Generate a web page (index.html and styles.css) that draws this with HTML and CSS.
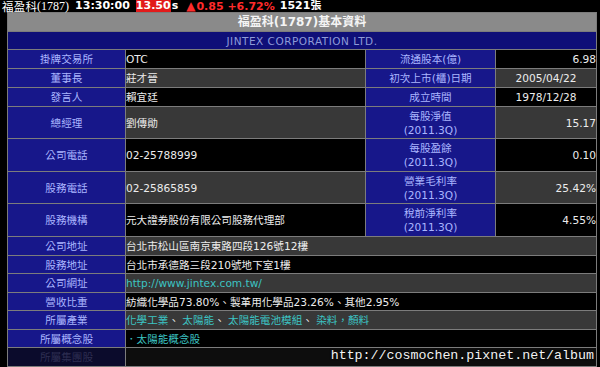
FILE: index.html
```
<!DOCTYPE html>
<html lang="zh-Hant">
<head>
<meta charset="utf-8">
<title>福盈科(1787)基本資料</title>
<link rel="stylesheet" href="styles.css">
</head>
<body>
<div class="quote">
  <span class="name">福盈科</span><span class="code">(1787)</span>
  <span class="time">13:30:00</span>
  <span class="price">13.50</span>
  <span class="unit">s</span>
  <span class="chg"><span class="tri">▲</span>0.85 +6.72%</span>
  <span class="vol">1521張</span>
</div>
<table class="info">
  <colgroup>
    <col class="c1"><col class="c2"><col class="c3"><col class="c4">
  </colgroup>
  <tr class="h-title"><th colspan="4" class="title">福盈科(1787)基本資料</th></tr>
  <tr class="h-en"><th colspan="4" class="en">JINTEX CORPORATION LTD.</th></tr>
  <tr class="s odd"><td class="lab">掛牌交易所</td><td class="val">OTC</td><td class="lab">流通股本(億)</td><td class="num">6.98</td></tr>
  <tr class="s even"><td class="lab">董事長</td><td class="val">莊才晉</td><td class="lab">初次上市(櫃)日期</td><td class="date">2005/04/22</td></tr>
  <tr class="s odd"><td class="lab">發言人</td><td class="val">賴宜廷</td><td class="lab">成立時間</td><td class="date">1978/12/28</td></tr>
  <tr class="t1 even"><td class="lab">總經理</td><td class="val">劉傳勛</td><td class="lab">每股淨值<br>(2011.3Q)</td><td class="num">15.17</td></tr>
  <tr class="t2 odd"><td class="lab">公司電話</td><td class="val">02-25788999</td><td class="lab">每股盈餘<br>(2011.3Q)</td><td class="num">0.10</td></tr>
  <tr class="t1 even"><td class="lab">股務電話</td><td class="val">02-25865859</td><td class="lab">營業毛利率<br>(2011.3Q)</td><td class="num">25.42%</td></tr>
  <tr class="t2 odd"><td class="lab">股務機構</td><td class="val">元大證券股份有限公司股務代理部</td><td class="lab">稅前淨利率<br>(2011.3Q)</td><td class="num">4.55%</td></tr>
  <tr class="s even"><td class="lab">公司地址</td><td class="val" colspan="3">台北市松山區南京東路四段126號12樓</td></tr>
  <tr class="s2 odd"><td class="lab">股務地址</td><td class="val" colspan="3">台北市承德路三段210號地下室1樓</td></tr>
  <tr class="s even"><td class="lab">公司網址</td><td class="val" colspan="3"><a class="link" href="#">http://www.jintex.com.tw/</a></td></tr>
  <tr class="s2 odd"><td class="lab">營收比重</td><td class="val" colspan="3">紡織化學品73.80%、製革用化學品23.26%、其他2.95%</td></tr>
  <tr class="s even"><td class="lab">所屬產業</td><td class="val" colspan="3"><a class="link" href="#">化學工業</a>、 <a class="link" href="#">太陽能</a>、 <a class="link" href="#">太陽能電池模組</a>、 <a class="link" href="#">染料，顏料</a></td></tr>
  <tr class="s2 odd"><td class="lab">所屬概念股</td><td class="val" colspan="3"><a class="link" href="#">．太陽能概念股</a></td></tr>
  <tr class="s dim"><td class="lab">所屬集團股</td><td class="val" colspan="3"></td></tr>
</table>
<div class="mark">http://cosmochen.pixnet.net/album</div>
</body>
</html>
```

FILE: styles.css
```
html, body {
  margin: 0;
  padding: 0;
  background: #000;
  height: 367px;
  overflow: hidden;
}
body {
  position: relative;
  font-family: "DejaVu Sans", "Noto Sans CJK TC", sans-serif;
}

/* quote bar */
.quote {
  display: flex;
  align-items: center;
  height: 12px;
  padding-left: 2px;
  color: #fff;
  font-size: 11px;
  font-weight: bold;
  line-height: 12px;
  white-space: nowrap;
}
.quote .name {
  font-family: "Noto Sans CJK TC", sans-serif;
  font-weight: normal;
  font-size: 11.5px;
  line-height: 12px;
  letter-spacing: 0.2px;
}
.quote .code {
  font-family: "Liberation Serif", serif;
  font-weight: normal;
  font-size: 12px;
  line-height: 12px;
}
.quote .time { margin-left: 6px; }
.quote .price {
  margin-left: 6px;
  background: #e21b1b;
  color: #fff;
}
.quote .unit { margin-left: 1px; }
.quote .chg {
  margin-left: 8px;
  color: #ff2b2b;
}
.quote .tri {
  font-size: 12px;
  margin-right: 1px;
}
.quote .vol {
  margin-left: 5px;
}

/* info table */
.info {
  margin-left: 7px;
  width: 590px;
  table-layout: fixed;
  border-collapse: separate;
  border-spacing: 1px;
  background: #7c7c7c;
  font-size: 10.6px;
  line-height: 14px;
}
.c1 { width: 117px; }
.c2 { width: 239px; }
.c3 { width: 129px; }
.c4 { width: 100px; }

.info th, .info td {
  padding: 0;
  white-space: nowrap;
  overflow: hidden;
}
.title {
  height: 18px;
  background: #8a8a8a;
  color: #f4f4f4;
  font-size: 12px;
  font-weight: bold;
  text-align: center;
}
.en {
  height: 17px;
  background: #0f0f78;
  color: #8e9bd8;
  font-weight: normal;
  font-size: 10.5px;
  letter-spacing: 0.5px;
  text-align: center;
}
.s td { height: 18px; }
.s2 td { height: 17px; }
.t1 td { height: 31px; }
.t2 td { height: 32px; }

.lab {
  background: #17178a;
  color: #aab5ff;
  text-align: center;
  padding-top: 1px;
}
.val {
  padding-left: 2px;
  color: #ececec;
  padding-top: 1px;
}
.num {
  text-align: right;
  padding-right: 1px;
  color: #ececec;
}
.date {
  text-align: center;
  color: #ececec;
}
.odd .val, .odd .num, .odd .date { background: #000; }
.even .val, .even .num, .even .date { background: #383838; }

.link {
  color: #3cc4c4;
  text-decoration: none;
}

.dim .lab {
  background: #0b0b2c;
  color: #2e2e52;
}
.dim .val { background: #0d0d0d; }

/* watermark over the photo */
.mark {
  position: absolute;
  right: 6px;
  bottom: 4px;
  font-family: "Liberation Mono", monospace;
  font-size: 13.3px;
  line-height: 14px;
  color: #f2f2f2;
  text-shadow: 0 0 2px #000;
}
```
